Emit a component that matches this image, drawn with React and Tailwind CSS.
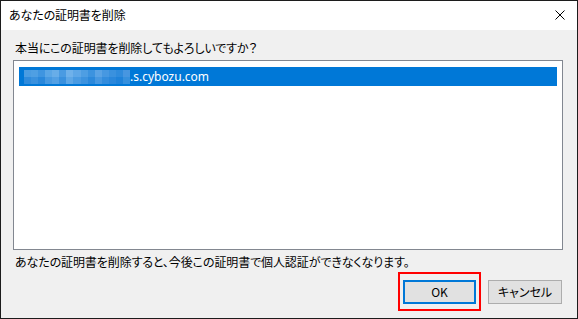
import React from "react";

const blur = [
  ["#4a9ce2", "#4f9fe3", "#3f95e0", "#5aa6e6", "#68ade8", "#4a9be2", "#6fb1ea", "#5ea7e7", "#4e9ee3", "#3c93df", "#5aa3e5", "#4798e1", "#3a91de", "#2f8bdc", "#4796e0"],
  ["#2f8bdc", "#3a91de", "#2a88db", "#4799e1", "#53a0e4", "#3a91de", "#5ea7e6", "#4a9be2", "#3d93df", "#2c89db", "#4798e1", "#348ddd", "#2a87db", "#1f82d9", "#3690dd"],
];

export default function App() {
  return (
    <div
      className="w-[578px] h-[319px] border border-[#1c1c1c] flex flex-col bg-[#f0f0f0] text-[12px] text-black overflow-hidden"
      style={{ fontFamily: '"Noto Sans CJK JP", "Noto Sans", sans-serif' }}
    >
      {/* タイトルバー */}
      <div className="h-[29px] bg-white flex items-center justify-between pl-[8px] pr-[12px] pb-[1px] shrink-0">
        <span className="[font-feature-settings:'palt'] tracking-[-0.1px] leading-none">あなたの証明書を削除</span>
        <svg width="10" height="10" viewBox="0 0 10 10">
          <path d="M0.5 0.5 L9.5 9.5 M9.5 0.5 L0.5 9.5" stroke="#000" strokeWidth="1" />
        </svg>
      </div>

      <div className="flex-1 flex flex-col px-[12px] pr-[14px]">
        <p className="mt-[10px] ml-[2px] leading-[16px] tracking-[-0.1px] [font-feature-settings:'palt']">
          本当にこの証明書を削除してもよろしいですか？
        </p>

        {/* リスト */}
        <div className="mt-[4px] h-[190px] bg-white border border-[#828790] px-[5px] pt-[6px]">
          <div className="h-[19px] bg-[#0078d7] flex items-center pl-[5px] text-white">
            <div className="flex flex-col h-[14px] w-[106px]">
              {blur.map((row, i) => (
                <div key={i} className="flex flex-1">
                  {row.map((c, j) => (
                    <div key={j} className="flex-1" style={{ backgroundColor: c }} />
                  ))}
                </div>
              ))}
            </div>
            <span className="leading-none" style={{ fontFamily: '"Noto Sans", sans-serif' }}>.s.cybozu.com</span>
          </div>
        </div>

        <p className="mt-[4px] ml-[2px] leading-[16px] tracking-[-0.1px] [font-feature-settings:'palt']">
          あなたの証明書を削除すると、今後この証明書で個人認証ができなくなります。
        </p>

        {/* ボタン */}
        <div className="mt-[10px] flex justify-end gap-[12px] pr-[1px]">
          <div className="relative">
            <button className="w-[73px] h-[24px] bg-[#e1e1e1] border-2 border-[#0078d7] leading-none">
              OK
            </button>
            <div className="absolute left-[-5px] right-[-5px] top-[-8px] bottom-[-7px] border-2 border-[#ff0000] pointer-events-none" />
          </div>
          <button className="w-[74px] h-[24px] bg-[#e1e1e1] border border-[#adadad] leading-none [font-feature-settings:'palt']">
            キャンセル
          </button>
        </div>
      </div>
    </div>
  );
}
